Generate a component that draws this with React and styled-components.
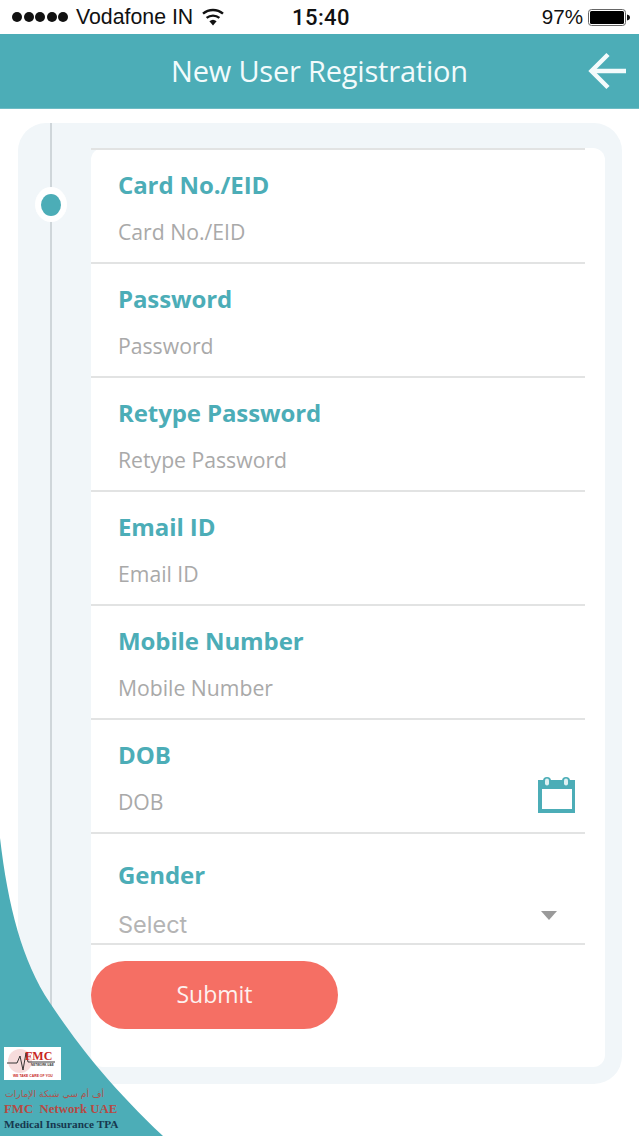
import React from 'react'
import styled, { createGlobalStyle } from 'styled-components'

const TEAL = '#4cadb7'

const GlobalStyle = createGlobalStyle`
  html, body {
    margin: 0;
    padding: 0;
    background: #fff;
  }
  * {
    box-sizing: border-box;
  }
`
const Page = styled.div`
  position: relative;
  width: 639px;
  height: 1136px;
  overflow: hidden;
  background: #fff;
  display: flex;
  flex-direction: column;
  font-family: 'Open Sans', sans-serif;
`
const StatusBar = styled.div`
  height: 34px;
  padding: 0 9px 0 12px;
  display: grid;
  grid-template-columns: 1fr auto 1fr;
  align-items: center;
  font-family: 'Liberation Sans', sans-serif;
  font-size: 21.3px;
  color: #111;
`
const StatusLeft = styled.div`
  display: flex;
  align-items: center;
`
const Signal = styled.div`
  display: flex;
  gap: 1.5px;
  margin-right: 8px;
`
const SignalDot = styled.span`
  width: 10px;
  height: 10px;
  border-radius: 50%;
  background: #111;
`
const Wifi = styled.svg`
  width: 24px;
  height: 18px;
  margin-left: 8px;
`
const Clock = styled.div`
  font-family: 'Roboto', sans-serif;
  font-weight: 500;
  font-size: 22px;
  letter-spacing: 0.4px;
`
const StatusRight = styled.div`
  display: flex;
  justify-content: flex-end;
  align-items: center;
  gap: 5px;
  font-size: 20.6px;
`
const Battery = styled.svg`
  width: 42px;
  height: 17px;
`
const Header = styled.header`
  position: relative;
  height: 75px;
  background: ${TEAL};
  display: flex;
  align-items: center;
  justify-content: center;
  border-bottom: 1px solid #6fbcc5;
`
const Title = styled.h1`
  margin: 0 0 1px;
  font-family: 'Open Sans', sans-serif;
  font-weight: 400;
  font-size: 29px;
  letter-spacing: -0.2px;
  color: #f2fbfc;
`
const BackIcon = styled.svg`
  position: absolute;
  right: 12px;
  top: 18px;
  width: 40px;
  height: 38px;
`
const Panel = styled.main`
  margin: 14px 17px 0 18px;
  height: 961px;
  border-radius: 28px;
  background: #f1f6f9;
  display: flex;
  padding: 25px 17px 17px 0;
`
const Rail = styled.div`
  position: relative;
  width: 73px;
  margin-top: -25px;
  margin-bottom: -17px;
  flex: none;
`
const RailLine = styled.div`
  position: absolute;
  left: 32px;
  top: 0;
  bottom: 0;
  width: 2px;
  background: #cfd6da;
`
const RailDot = styled.div`
  position: absolute;
  left: 17px;
  top: 64px;
  width: 32px;
  height: 35px;
  border-radius: 50%;
  background: #fff;
  display: flex;
  align-items: center;
  justify-content: center;
  &::after {
    content: '';
    width: 20px;
    height: 22px;
    border-radius: 50%;
    background: ${TEAL};
  }
`
const Card = styled.div`
  flex: 1;
  background: #fff;
  border-radius: 12px;
  padding-right: 20px;
  display: flex;
  flex-direction: column;
  align-items: stretch;
`
const TopRule = styled.div`
  height: 2px;
  background: #e2e3e3;
`
const Row = styled.div`
  position: relative;
  height: ${(props) => props.height || 114}px;
  padding: ${(props) => props.top || 17}px 0 0 27px;
  border-bottom: 2px solid #e2e3e3;
`
const Label = styled.div`
  font-size: 24px;
  line-height: 36px;
  font-weight: 700;
  letter-spacing: -0.1px;
  color: ${TEAL};
`
const Placeholder = styled.div`
  margin-top: 14px;
  font-size: 21.2px;
  line-height: 30px;
  color: #a9a9a9;
`
const SelectValue = styled.div`
  margin-top: 17px;
  font-family: 'Inter', sans-serif;
  font-size: 23.5px;
  line-height: 30px;
  color: #b4b4b4;
`
const CalendarIcon = styled.svg`
  position: absolute;
  right: 10px;
  top: 57px;
  width: 37px;
  height: 37px;
`
const Caret = styled.div`
  position: absolute;
  right: 28px;
  top: 77px;
  width: 0;
  height: 0;
  border-left: 8px solid transparent;
  border-right: 8px solid transparent;
  border-top: 9px solid #9a9a9a;
`
const SubmitButton = styled.button`
  width: 247px;
  height: 68px;
  margin-top: 16px;
  padding: 0 0 2px;
  border: 0;
  border-radius: 34px;
  background: #f56f64;
  color: #fdf1ef;
  font-family: 'Open Sans', sans-serif;
  font-size: 23px;
`
const Wave = styled.svg`
  position: absolute;
  left: 0;
  bottom: 0;
  width: 170px;
  height: 300px;
`
const Brand = styled.div`
  position: absolute;
  left: 4px;
  top: 1047px;
  width: 120px;
  font-family: 'Liberation Serif', serif;
  font-weight: 700;
`
const LogoBox = styled.div`
  width: 57px;
  height: 33px;
  background: #fff;
`
const LogoSvg = styled.svg`
  display: block;
  width: 57px;
  height: 33px;
`
const ArabicName = styled.div`
  margin-top: 7px;
  width: 100px;
  text-align: right;
  direction: rtl;
  white-space: nowrap;
  font-family: 'DejaVu Sans', sans-serif;
  font-weight: 400;
  font-size: 9.2px;
  line-height: 14px;
  color: #b0524c;
`
const BrandName = styled.div`
  margin-top: 1px;
  font-size: 12.8px;
  line-height: 15px;
  white-space: pre;
  color: #b74a44;
`
const BrandTagline = styled.div`
  font-size: 11.3px;
  line-height: 14px;
  white-space: nowrap;
  color: #17384f;
`

const fields = ['Card No./EID', 'Password', 'Retype Password', 'Email ID', 'Mobile Number']

const App = () => {
  return (
    <Page>
      <GlobalStyle />
      <StatusBar>
        <StatusLeft>
          <Signal>
            {[0, 1, 2, 3, 4].map((i) => (
              <SignalDot key={i} />
            ))}
          </Signal>
          Vodafone IN
          <Wifi viewBox='0 0 24 18'>
            <path d='M12 17.5 8.4 13.2a5.6 5.6 0 0 1 7.2 0z' fill='#111' />
            <path d='M5.6 9.9a10 10 0 0 1 12.8 0' stroke='#111' strokeWidth='2.4' fill='none' />
            <path d='M2 5.7a15.4 15.4 0 0 1 20 0' stroke='#111' strokeWidth='2.4' fill='none' />
          </Wifi>
        </StatusLeft>
        <Clock>15:40</Clock>
        <StatusRight>
          97%
          <Battery viewBox='0 0 42 17'>
            <rect x='0.5' y='0.5' width='37' height='16' rx='3' fill='none' stroke='#666' />
            <rect x='2' y='2' width='34' height='13' rx='1.5' fill='#000' />
            <path d='M39 5.5c2 .3 3 1.5 3 3s-1 2.7-3 3z' fill='#111' />
          </Battery>
        </StatusRight>
      </StatusBar>

      <Header>
        <Title>New User Registration</Title>
        <BackIcon viewBox='0 0 40 38' fill='none' stroke='#f4fbfc' strokeWidth='4.5'>
          <path d='M39 19H5' />
          <path d='M21 2.5 4.5 19 21 35.5' />
        </BackIcon>
      </Header>

      <Panel>
        <Rail>
          <RailLine />
          <RailDot />
        </Rail>
        <Card>
          <TopRule />
          {fields.map((name) => (
            <Row key={name}>
              <Label>{name}</Label>
              <Placeholder>{name}</Placeholder>
            </Row>
          ))}
          <Row>
            <Label>DOB</Label>
            <Placeholder>DOB</Placeholder>
            <CalendarIcon viewBox='0 0 37 37'>
              <path fillRule='evenodd' fill={TEAL} d='M0 3h37v33H0zM4 12v20h30V12z' />
              <rect x='5' y='0' width='8' height='10' rx='4' fill={TEAL} />
              <rect x='24' y='0' width='8' height='10' rx='4' fill={TEAL} />
              <rect x='7' y='1.5' width='4' height='7' rx='2' fill='#dff1f3' />
              <rect x='26' y='1.5' width='4' height='7' rx='2' fill='#dff1f3' />
            </CalendarIcon>
          </Row>
          <Row height={111} top={23}>
            <Label>Gender</Label>
            <SelectValue>Select</SelectValue>
            <Caret />
          </Row>
          <SubmitButton>Submit</SubmitButton>
        </Card>
      </Panel>

      <Wave viewBox='0 0 170 300'>
        <path d='M0 2C8 70 22 125 50 167S110 250 163 300H0Z' fill={TEAL} />
      </Wave>

      <Brand>
        <LogoBox>
          <LogoSvg viewBox='0 0 57 33'>
            <circle cx='16' cy='14' r='12' fill='#f7dcdc' />
            <path
              d='M3 16h10l3-7 3 14 3-17 2 9h27'
              fill='none'
              stroke='#222'
              strokeWidth='0.9'
            />
            <text x='21' y='12.5' fontFamily='Liberation Serif' fontWeight='700' fontSize='12' fill='#c8261e'>
              FMC
            </text>
            <text x='27' y='19' fontFamily='Liberation Sans' fontSize='3' fill='#333'>
              NETWORK UAE
            </text>
            <text x='9' y='30' fontFamily='Liberation Sans' fontWeight='700' fontSize='3.4' fill='#c8261e'>
              WE TAKE CARE OF YOU
            </text>
          </LogoSvg>
        </LogoBox>
        <ArabicName>أف أم سي شبكة الإمارات</ArabicName>
        <BrandName>FMC  Network UAE</BrandName>
        <BrandTagline>Medical Insurance TPA</BrandTagline>
      </Brand>
    </Page>
  )
}

export default App
